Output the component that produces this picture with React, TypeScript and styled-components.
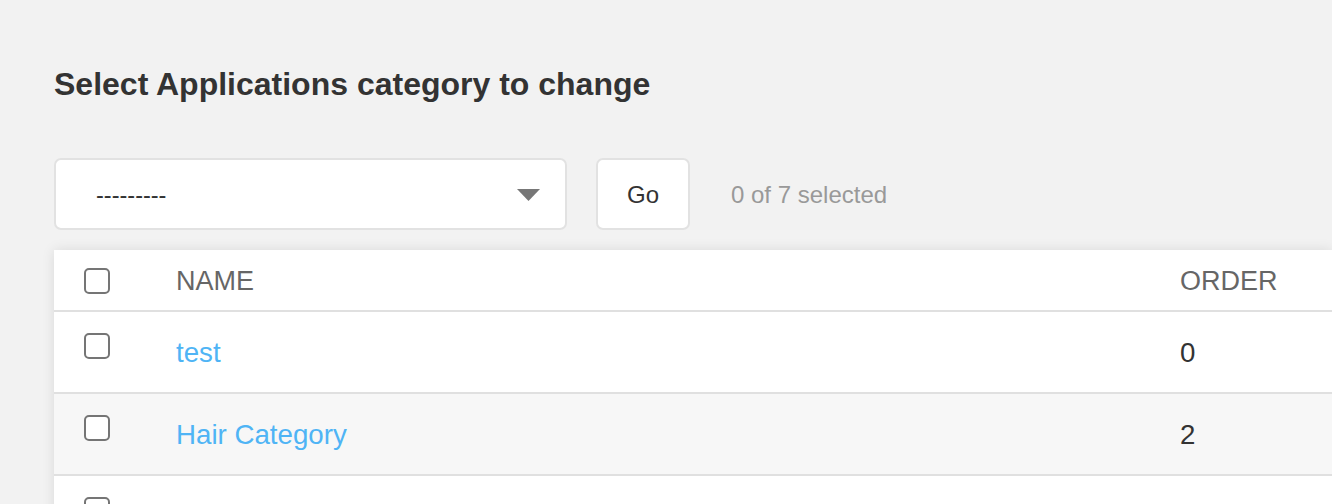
import React from "react";
import styled, { createGlobalStyle } from "styled-components";

const Global = createGlobalStyle`
  html, body { margin: 0; padding: 0; }
  body {
    background: #f2f2f2;
    font-family: "Liberation Sans", Arial, Helvetica, sans-serif;
    color: #333;
    overflow: hidden;
  }
`;

const Page = styled.div`
  padding: 64px 0 0 54px;
  width: 1332px;
  box-sizing: border-box;
`;

const Title = styled.h1`
  margin: 0 0 54px;
  font-size: 32px;
  line-height: 40px;
  font-weight: 700;
  color: #333;
`;

const Actions = styled.div`
  display: flex;
  align-items: center;
  height: 72px;
`;

const SelectBox = styled.div`
  position: relative;
  box-sizing: border-box;
  width: 513px;
  height: 72px;
  background: #fff;
  border: 2px solid #e2e2e2;
  border-radius: 7px;
  display: flex;
  align-items: center;
  justify-content: space-between;
  padding: 2px 25px 0 40px;
  font-size: 23.5px;
  color: #333;
`;

const Button = styled.button`
  box-sizing: border-box;
  margin-left: 29px;
  width: 94px;
  height: 72px;
  background: #fff;
  border: 2px solid #e2e2e2;
  border-radius: 7px;
  font-family: inherit;
  font-size: 24px;
  color: #333;
  padding: 2px 0 0;
`;

const Counter = styled.span`
  margin-left: 41px;
  padding-top: 2px;
  font-size: 24px;
  color: #999;
`;

const Table = styled.div`
  margin-top: 20px;
  background: #fff;
  box-shadow: 0 0 12px rgba(0, 0, 0, 0.1);
`;

const Row = styled.div<{ $head?: boolean; $alt?: boolean }>`
  display: grid;
  grid-template-columns: 122px 1fr 152px;
  height: ${(p) => (p.$head ? 60 : 80)}px;
  background: ${(p) => (p.$alt ? "#f7f7f7" : "#fff")};
  border-bottom: 2px solid #e0e0e0;
`;

const Cell = styled.div<{ $head?: boolean }>`
  padding-top: ${(p) => (p.$head ? 13 : 23)}px;
  font-size: ${(p) => (p.$head ? 27 : 27.7)}px;
  line-height: 36px;
  color: ${(p) => (p.$head ? "#666" : "#333")};
  text-transform: ${(p) => (p.$head ? "uppercase" : "none")};
  white-space: nowrap;
`;

const CheckCell = styled.div<{ $head?: boolean }>`
  padding: ${(p) => (p.$head ? 18 : 21)}px 0 0 30px;
`;

const Box = styled.span`
  display: block;
  box-sizing: border-box;
  width: 26px;
  height: 26px;
  border: 2px solid #757575;
  border-radius: 5px;
  background: #fff;
`;

const Link = styled.a`
  color: #4fb4f5;
  text-decoration: none;
`;

const rows = [
  { name: "test", order: "0" },
  { name: "Hair Category", order: "2" },
  { name: "", order: "" },
];

export default function App() {
  return (
    <>
      <Global />
      <Page>
        <Title>Select Applications category to change</Title>
        <Actions>
          <SelectBox>
            <span>---------</span>
            <svg width="23" height="12" viewBox="0 0 23 12">
              <path d="M0 0 H23 L11.5 12 Z" fill="#777" />
            </svg>
          </SelectBox>
          <Button>Go</Button>
          <Counter>0 of 7 selected</Counter>
        </Actions>
        <Table>
          <Row $head>
            <CheckCell $head>
              <Box />
            </CheckCell>
            <Cell $head>Name</Cell>
            <Cell $head>Order</Cell>
          </Row>
          {rows.map((r, i) => (
            <Row key={i} $alt={i % 2 === 1}>
              <CheckCell>
                <Box />
              </CheckCell>
              <Cell>
                <Link href="#">{r.name}</Link>
              </Cell>
              <Cell>{r.order}</Cell>
            </Row>
          ))}
        </Table>
      </Page>
    </>
  );
}
